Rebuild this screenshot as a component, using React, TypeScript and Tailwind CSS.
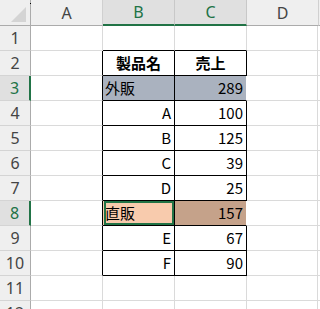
import React from "react";

type Fill = "none" | "slate" | "peach" | "tan";

interface CellData {
  text?: string;
  align?: "left" | "center" | "right";
  bold?: boolean;
  fill?: Fill;
  active?: boolean;
}

interface RowData {
  n: number;
  b: CellData;
  c: CellData;
  selected?: boolean;
}

const rows: RowData[] = [
  { n: 1, b: {}, c: {} },
  { n: 2, b: { text: "製品名", align: "center", bold: true }, c: { text: "売上", align: "center", bold: true } },
  { n: 3, b: { text: "外販", align: "left", fill: "slate" }, c: { text: "289", fill: "slate" }, selected: true },
  { n: 4, b: { text: "A" }, c: { text: "100" } },
  { n: 5, b: { text: "B" }, c: { text: "125" } },
  { n: 6, b: { text: "C" }, c: { text: "39" } },
  { n: 7, b: { text: "D" }, c: { text: "25" } },
  { n: 8, b: { text: "直販", align: "left", fill: "peach", active: true }, c: { text: "157", fill: "tan" }, selected: true },
  { n: 9, b: { text: "E" }, c: { text: "67" } },
  { n: 10, b: { text: "F" }, c: { text: "90" } },
  { n: 11, b: {}, c: {} },
  { n: 12, b: {}, c: {} },
];

const cellFont = { fontFamily: '"Noto Sans CJK JP", "Noto Sans", sans-serif' };
const headFont = { fontFamily: '"Noto Sans", "Liberation Sans", sans-serif' };

function fillClass(fill?: Fill) {
  if (fill === "slate") return "bg-[#aab2bf]";
  if (fill === "peach") return "bg-[#f8cbad]";
  if (fill === "tan") return "bg-[#c5a28a]";
  return "bg-white";
}

function alignClass(align?: CellData["align"]) {
  if (align === "left") return "justify-start pl-[2px]";
  if (align === "center") return "justify-center";
  return "justify-end pr-[3px]";
}

function DataCell({ cell, inTable, topOfTable, last }: { cell: CellData; inTable: boolean; topOfTable: boolean; last?: boolean }) {
  const borderR = inTable ? (cell.fill && cell.fill !== "none" && last ? "border-r-white" : "border-r-black") : "border-r-[#dadada]";
  const borderB = inTable || topOfTable ? "border-b-black" : "border-b-[#dadada]";
  return (
    <div
      className={`relative w-[72px] shrink-0 h-full border-r border-b flex items-center text-[15px] text-black ${borderR} ${borderB} ${fillClass(cell.fill)} ${alignClass(cell.align)} ${cell.bold ? "font-bold" : "font-normal"}`}
      style={cellFont}
    >
      {cell.text}
      {cell.active && <span className="absolute left-[1px] top-0 right-0 bottom-0 border-2 border-[#217346]" />}
    </div>
  );
}

export default function App() {
  const headers = ["A", "B", "C", "D"];
  return (
    <div className="w-[320px] h-[309px] overflow-hidden bg-white select-none">
      {/* column headers */}
      <div className="flex h-[26px]">
        <div className="relative w-[31px] shrink-0 h-full bg-[#efefef] border-r border-b border-[#ababab]">
          <svg className="absolute left-[10px] top-[7px]" width="17" height="16" viewBox="0 0 17 16">
            <polygon points="16,0 16,15 1,15" fill="#d4d4d4" />
          </svg>
          <span className="absolute right-[-1px] top-[3px] w-px h-px bg-black" />
        </div>
        {headers.map((h) => {
          const sel = h === "B" || h === "C";
          return (
            <div
              key={h}
              className={
                sel
                  ? "w-[72px] shrink-0 h-full flex items-center justify-center text-[16px] text-[#217346] bg-[#e0e0e0] border-r border-r-[#c8c8c8] border-b-2 border-b-[#217346]"
                  : "w-[72px] shrink-0 h-full flex items-center justify-center text-[16px] text-[#444] bg-[#efefef] border-r border-r-[#d0d0d0] border-b border-b-[#ababab]"
              }
              style={headFont}
            >
              {h}
            </div>
          );
        })}
        <div className="flex-1 h-full bg-[#efefef] border-b border-[#ababab]" />
      </div>

      {/* rows */}
      {rows.map((r) => {
        const inTable = r.n >= 2 && r.n <= 10;
        return (
          <div key={r.n} className="flex h-[25px]">
            <div
              className={
                r.selected
                  ? "w-[31px] shrink-0 h-full flex items-center justify-center text-[16px] text-[#217346] bg-[#e0e0e0] border-r-2 border-r-[#217346] border-b border-b-[#d4d4d4]"
                  : "w-[31px] shrink-0 h-full flex items-center justify-center text-[16px] text-[#444] bg-[#efefef] border-r border-r-[#ababab] border-b border-b-[#d4d4d4]"
              }
              style={headFont}
            >
              {r.n}
            </div>
            <div className={`w-[72px] shrink-0 h-full border-b border-b-[#dadada] border-r ${inTable ? "border-r-black" : "border-r-[#dadada]"}`} />
            <DataCell cell={r.b} inTable={inTable} topOfTable={r.n === 1} />
            <DataCell cell={r.c} inTable={inTable} topOfTable={r.n === 1} last />
            <div className="w-[71px] shrink-0 h-full border-r border-b border-[#dadada]" />
            <div className="flex-1 h-full border-b border-[#dadada]" />
          </div>
        );
      })}
    </div>
  );
}
